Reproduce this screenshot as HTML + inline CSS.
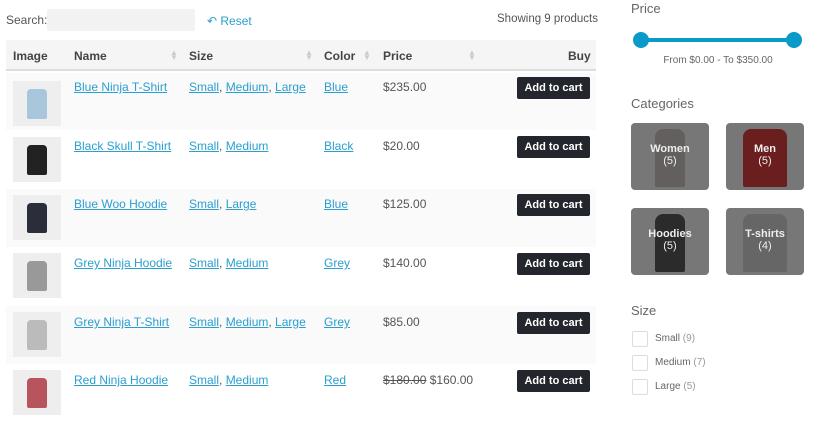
<!DOCTYPE html>
<html><head><style>
*{box-sizing:border-box;margin:0;padding:0}
body{width:820px;height:423px;overflow:hidden;background:#fff;font-family:"Liberation Sans",sans-serif;color:#555;position:relative;font-size:12px}
.a{position:absolute}
a{color:#2a9fd0;text-decoration:underline}
.hd{font-weight:bold;color:#444;font-size:12px}
.btn{position:absolute;left:517px;width:73px;height:22px;background:#23272d;color:#fff;font-weight:bold;font-size:11px;text-align:center;line-height:22px;border-radius:2px}
.img{position:absolute;left:13px;width:48px;height:45px;background:#eee}
.img i{position:absolute;left:14px;top:8px;width:20px;height:30px;border-radius:4px 4px 2px 2px}
.sort{position:absolute;color:#ccc;font-size:8px;line-height:5px}
.tile{position:absolute;width:78px;height:67px;background:#777;border-radius:4px;color:#eee;text-align:center;font-weight:bold;font-size:11px;overflow:hidden}
.tile b{position:absolute;left:24px;top:6px;width:30px;height:58px;border-radius:8px 8px 2px 2px}
.tile div{position:relative}
.cb{position:absolute;left:632px;width:16px;height:16px;border:1px solid #ddd;border-radius:2px;background:#fff}
.sl{position:absolute;left:655px;font-size:10px;color:#666}
.sl span{color:#999}
</style></head><body>
<div class="a" style="left:6px;top:13px">Search:</div>
<div class="a" style="left:47px;top:9px;width:148px;height:22px;background:#f2f2f2;border-radius:2px"></div>
<div class="a" style="left:207px;top:14px;color:#2a9fd0">↶ Reset</div>
<div class="a" style="left:497px;top:13px;font-size:11.5px">Showing 9 products</div>
<div class="a" style="left:6px;top:40px;width:590px;height:31px;background:#f5f5f5;border-bottom:2px solid #ddd"></div>
<div class="a hd" style="left:13px;top:49px">Image</div>
<div class="a hd" style="left:74px;top:49px">Name</div>
<div class="a hd" style="left:189px;top:49px">Size</div>
<div class="a hd" style="left:324px;top:49px">Color</div>
<div class="a hd" style="left:383px;top:49px">Price</div>
<div class="a hd" style="left:568px;top:49px">Buy</div>
<div class="sort" style="left:170px;top:50px">▲<br>▼</div>
<div class="sort" style="left:305px;top:50px">▲<br>▼</div>
<div class="sort" style="left:363px;top:50px">▲<br>▼</div>
<div class="sort" style="left:468px;top:50px">▲<br>▼</div>
<div class="a" style="left:6px;top:73px;width:590px;height:57px;background:#fafafa"></div>
<div class="a" style="left:6px;top:189px;width:590px;height:58px;background:#fafafa"></div>
<div class="a" style="left:6px;top:306px;width:590px;height:58px;background:#fafafa"></div>

<div class="img" style="top:81px"><i style="background:#a9c7dc"></i></div>
<div class="a" style="left:74px;top:80px"><a>Blue Ninja T-Shirt</a></div>
<div class="a" style="left:189px;top:80px"><a>Small</a>, <a>Medium</a>, <a>Large</a></div>
<div class="a" style="left:324px;top:80px"><a>Blue</a></div>
<div class="a" style="left:383px;top:80px">$235.00</div>
<div class="btn" style="top:77px">Add to cart</div>

<div class="img" style="top:137px"><i style="background:#222"></i></div>
<div class="a" style="left:74px;top:139px"><a>Black Skull T-Shirt</a></div>
<div class="a" style="left:189px;top:139px"><a>Small</a>, <a>Medium</a></div>
<div class="a" style="left:324px;top:139px"><a>Black</a></div>
<div class="a" style="left:383px;top:139px">$20.00</div>
<div class="btn" style="top:136px">Add to cart</div>

<div class="img" style="top:195px"><i style="background:#2a2e3a"></i></div>
<div class="a" style="left:74px;top:197px"><a>Blue Woo Hoodie</a></div>
<div class="a" style="left:189px;top:197px"><a>Small</a>, <a>Large</a></div>
<div class="a" style="left:324px;top:197px"><a>Blue</a></div>
<div class="a" style="left:383px;top:197px">$125.00</div>
<div class="btn" style="top:194px">Add to cart</div>

<div class="img" style="top:253px"><i style="background:#999"></i></div>
<div class="a" style="left:74px;top:256px"><a>Grey Ninja Hoodie</a></div>
<div class="a" style="left:189px;top:256px"><a>Small</a>, <a>Medium</a></div>
<div class="a" style="left:324px;top:256px"><a>Grey</a></div>
<div class="a" style="left:383px;top:256px">$140.00</div>
<div class="btn" style="top:253px">Add to cart</div>

<div class="img" style="top:312px"><i style="background:#bbb"></i></div>
<div class="a" style="left:74px;top:315px"><a>Grey Ninja T-Shirt</a></div>
<div class="a" style="left:189px;top:315px"><a>Small</a>, <a>Medium</a>, <a>Large</a></div>
<div class="a" style="left:324px;top:315px"><a>Grey</a></div>
<div class="a" style="left:383px;top:315px">$85.00</div>
<div class="btn" style="top:312px">Add to cart</div>

<div class="img" style="top:370px"><i style="background:#b8545e"></i></div>
<div class="a" style="left:74px;top:373px"><a>Red Ninja Hoodie</a></div>
<div class="a" style="left:189px;top:373px"><a>Small</a>, <a>Medium</a></div>
<div class="a" style="left:324px;top:373px"><a>Red</a></div>
<div class="a" style="left:383px;top:373px"><s>$180.00</s> $160.00</div>
<div class="btn" style="top:370px">Add to cart</div>

<div class="a" style="left:631px;top:1px;font-size:13px;color:#666">Price</div>
<div class="a" style="left:641px;top:38px;width:153px;height:4px;background:#0a9ac8"></div>
<div class="a" style="left:633px;top:32px;width:16px;height:16px;border-radius:50%;background:#0a9ac8"></div>
<div class="a" style="left:786px;top:32px;width:16px;height:16px;border-radius:50%;background:#0a9ac8"></div>
<div class="a" style="left:631px;top:55px;width:174px;text-align:center;font-size:10px;color:#666">From $0.00 - To $350.00</div>
<div class="a" style="left:631px;top:96px;font-size:13px;color:#666">Categories</div>
<div class="tile" style="left:631px;top:123px"><b style="background:#645f5f"></b><div style="margin-top:20px">Women</div><div style="font-weight:normal">(5)</div></div>
<div class="tile" style="left:726px;top:123px"><b style="background:#6a1e1e;width:44px;left:17px"></b><div style="margin-top:20px">Men</div><div style="font-weight:normal">(5)</div></div>
<div class="tile" style="left:631px;top:208px"><b style="background:#2b2b2b"></b><div style="margin-top:20px">Hoodies</div><div style="font-weight:normal">(5)</div></div>
<div class="tile" style="left:726px;top:208px"><b style="background:#666;width:44px;left:17px"></b><div style="margin-top:20px">T-shirts</div><div style="font-weight:normal">(4)</div></div>
<div class="a" style="left:631px;top:303px;font-size:13px;color:#666">Size</div>
<div class="cb" style="top:331px"></div><div class="sl" style="top:333px">Small <span>(9)</span></div>
<div class="cb" style="top:355px"></div><div class="sl" style="top:357px">Medium <span>(7)</span></div>
<div class="cb" style="top:379px"></div><div class="sl" style="top:381px">Large <span>(5)</span></div>
</body></html>
